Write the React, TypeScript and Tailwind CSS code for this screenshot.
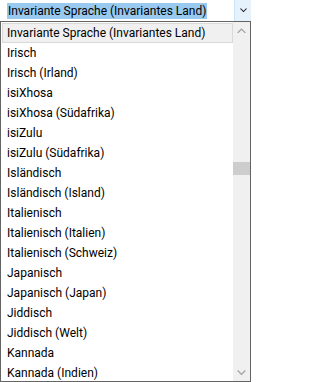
import React from "react";

const items = [
  "Invariante Sprache (Invariantes Land)",
  "Irisch",
  "Irisch (Irland)",
  "isiXhosa",
  "isiXhosa (Südafrika)",
  "isiZulu",
  "isiZulu (Südafrika)",
  "Isländisch",
  "Isländisch (Island)",
  "Italienisch",
  "Italienisch (Italien)",
  "Italienisch (Schweiz)",
  "Japanisch",
  "Japanisch (Japan)",
  "Jiddisch",
  "Jiddisch (Welt)",
  "Kannada",
  "Kannada (Indien)",
];

function Chevron({ up, color, size = 8 }: { up?: boolean; color: string; size?: number }) {
  return (
    <svg width={size} height={size / 2 + 1} viewBox="0 0 8 5" fill="none">
      <path
        d={up ? "M0.5 4.5 L4 1 L7.5 4.5" : "M0.5 0.5 L4 4 L7.5 0.5"}
        stroke={color}
        strokeWidth="1.2"
      />
    </svg>
  );
}

export default function App() {
  return (
    <div
      className="w-[251px] h-[382px] overflow-hidden bg-white text-black text-[12px] leading-none"
      style={{ fontFamily: 'Roboto, "Liberation Sans", sans-serif' }}
    >
      <div className="h-[21px] flex bg-white">
        <div className="flex-1 flex items-center pl-[7px]">
          <span className="bg-[#99c9ef] h-[16px] flex items-center px-[1px] whitespace-nowrap">
            Invariante Sprache (Invariantes Land)
          </span>
        </div>
        <div className="w-[17px] bg-[#e5f1fb] border-l border-[#cce4f7] flex items-center justify-center">
          <Chevron color="#1a1a1a" size={7} />
        </div>
      </div>
      <div className="h-[361px] border border-[#646464] flex overflow-hidden">
        <div className="flex-1 flex flex-col pt-[1px] pl-[1px] overflow-hidden">
          {items.map((t, i) => (
            <div
              key={t}
              className={
                "h-[20px] shrink-0 flex items-center whitespace-nowrap " +
                (i === 0
                  ? "bg-[#f0f0f0] border border-[#d9d9d9] pl-[4px]"
                  : "pl-[5px]")
              }
            >
              {t}
            </div>
          ))}
        </div>
        <div className="w-[17px] bg-[#f0f0f0] flex flex-col">
          <div className="h-[17px] flex items-center justify-center">
            <Chevron up color="#a3a3a3" size={9} />
          </div>
          <div className="h-[123px]" />
          <div className="h-[13px] bg-[#cdcdcd]" />
          <div className="flex-1" />
          <div className="h-[17px] flex items-center justify-center">
            <Chevron color="#a3a3a3" size={9} />
          </div>
        </div>
      </div>
    </div>
  );
}
